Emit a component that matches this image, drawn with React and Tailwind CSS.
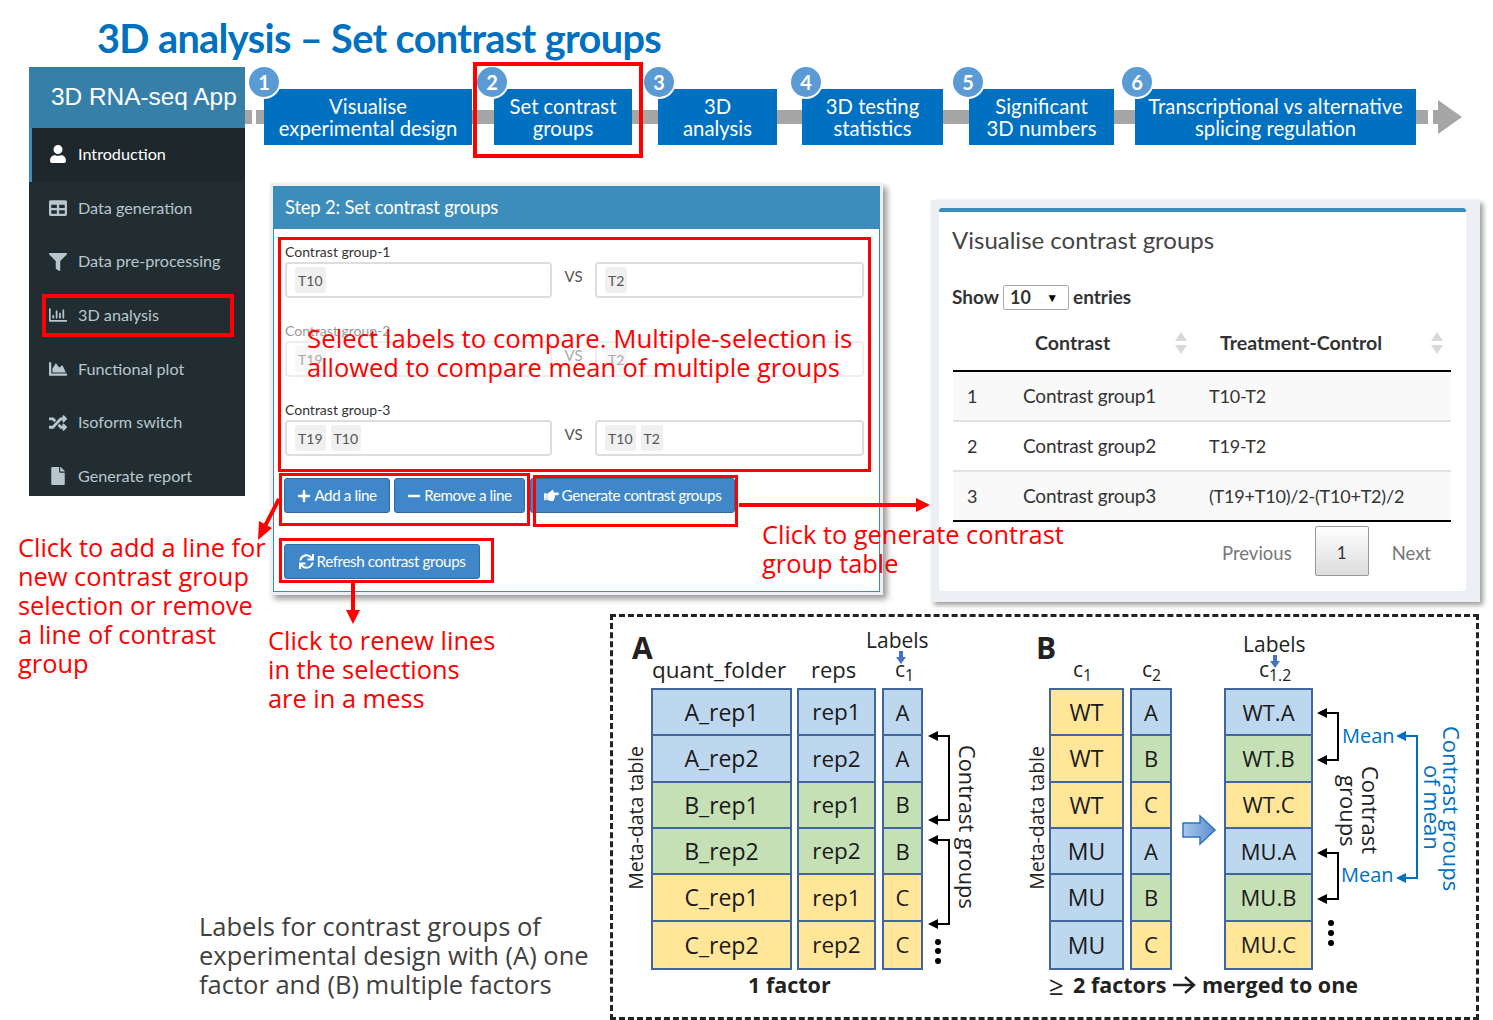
import React from 'react';
import {
  FaUser, FaTable, FaFilter, FaRegChartBar, FaChartArea, FaRandom, FaFile,
  FaPlus, FaMinus, FaHandPointRight, FaSync,
} from 'react-icons/fa';

const menu = [
  { label: 'Introduction', Icon: FaUser, active: true },
  { label: 'Data generation', Icon: FaTable },
  { label: 'Data pre-processing', Icon: FaFilter },
  { label: '3D analysis', Icon: FaRegChartBar },
  { label: 'Functional plot', Icon: FaChartArea },
  { label: 'Isoform switch', Icon: FaRandom },
  { label: 'Generate report', Icon: FaFile },
];

const steps = [
  { n: 1, lines: ['Visualise', 'experimental design'], box: 'w-[208px] mr-[22px]', badge: '-left-[15px]' },
  { n: 2, lines: ['Set contrast', 'groups'], box: 'w-[138px] mr-[26px]', badge: '-left-[17px]' },
  { n: 3, lines: ['3D', 'analysis'], box: 'w-[119px] mr-[25px]', badge: '-left-[14px]' },
  { n: 4, lines: ['3D testing', 'statistics'], box: 'w-[141px] mr-[26px]', badge: '-left-[11px]' },
  { n: 5, lines: ['Significant', '3D numbers'], box: 'w-[145px] mr-[21px]', badge: '-left-[16px]' },
  { n: 6, lines: ['Transcriptional vs alternative', 'splicing regulation'], box: 'w-[281px]', badge: '-left-[13px]' },
];

const groups = [
  { label: 'Contrast group-1', left: ['T10'], right: ['T2'] },
  { label: 'Contrast group-2', left: ['T19'], right: ['T2'], faded: true },
  { label: 'Contrast group-3', left: ['T19', 'T10'], right: ['T10', 'T2'] },
];

const rows = [
  { id: 1, name: 'Contrast group1', value: 'T10-T2', cls: 'bg-[#f9f9f9] border-b-2 border-[#e2e2e2]' },
  { id: 2, name: 'Contrast group2', value: 'T19-T2', cls: 'bg-white border-b-2 border-[#e2e2e2]' },
  { id: 3, name: 'Contrast group3', value: '(T19+T10)/2-(T10+T2)/2', cls: 'bg-[#f9f9f9] border-b-2 border-black' },
];

const tones = { b: 'bg-[#bdd7ee]', g: 'bg-[#c5e0b4]', y: 'bg-[#ffe699]' };

const Tag = ({ children }) => (
  <span className="h-[26px] px-[3px] flex items-center rounded-[3px] bg-[#f0f0f0] text-[14px] text-[#555]">{children}</span>
);

const SelectBox = ({ items }) => (
  <div className="h-[36px] flex items-center gap-[5px] pl-[8px] border-2 border-[#ddd] rounded-[4px]">
    {items.map((t) => <Tag key={t}>{t}</Tag>)}
  </div>
);

const Btn = ({ icon, children, className }) => (
  <div className={`h-[35px] flex items-center justify-center gap-[3px] rounded-[3px] bg-[#3f87c9] border border-[#2e6da4] text-white text-[15.2px] tracking-[-0.4px] ${className}`}>
    {icon}
    {children}
  </div>
);

const SortArrows = () => (
  <svg width="12" height="22" viewBox="0 0 12 22" className="shrink-0">
    <polygon points="6,0 12,9 0,9" fill="#d8d8d8" />
    <polygon points="6,22 12,13 0,13" fill="#d8d8d8" />
  </svg>
);

const Column = ({ cells, className }) => (
  <div className={`h-[282px] grid grid-rows-6 border-2 border-[#41659f] divide-y-2 divide-[#41659f] text-[#1a1a1a] ${className}`}>
    {cells.map(([text, tone], i) => (
      <div key={i} className={`flex items-center justify-center ${tones[tone]}`}>{text}</div>
    ))}
  </div>
);

const diagramText = "absolute font-['Open_Sans',sans-serif] text-[#222] whitespace-nowrap";
const redText = "absolute font-['Open_Sans',sans-serif] text-[#ff0000] leading-[29px] whitespace-nowrap";

export default function App() {
  return (
    <div className="relative w-[1493px] h-[1020px] overflow-hidden bg-white font-['Lato',sans-serif]">
      <h1 className="absolute left-[97px] top-[14px] text-[39.7px] leading-[48px] font-bold tracking-[-0.65px] text-[#0070c0] whitespace-nowrap">
        3D analysis – Set contrast groups
      </h1>

      {/* sidebar */}
      <aside className="absolute left-[29px] top-[67px] w-[216px] h-[429px] overflow-hidden flex flex-col bg-[#222d32]">
        <div className="h-[61px] shrink-0 flex items-center pl-[22px] bg-[#367fa9] text-white text-[24.4px] font-['Liberation_Sans',sans-serif] whitespace-nowrap">
          3D RNA-seq App
        </div>
        {menu.map(({ label, Icon, active }) => (
          <div
            key={label}
            className={active
              ? 'h-[54px] shrink-0 flex items-center pl-[17px] pb-[2px] border-l-[3px] border-[#3c8dbc] bg-[#1e282c] text-white text-[16.2px]'
              : 'h-[53.7px] shrink-0 flex items-center pl-[20px] pb-[2px] text-[#b8c7ce] text-[16.2px]'}
          >
            <span className="w-[29px] shrink-0 flex"><Icon className="w-[18px] h-[18px]" /></span>
            {label}
          </div>
        ))}
      </aside>
      <div className="absolute left-[42px] top-[294px] w-[192px] h-[43px] border-4 border-[#ff0000]" />

      {/* workflow strip */}
      <svg className="absolute left-[245px] top-[98px]" width="1220" height="38">
        <rect x="0" y="12" width="7" height="14" fill="#a6a6a6" />
        <rect x="11" y="12" width="1172" height="14" fill="#a6a6a6" />
        <polygon points="1188,12 1193,12 1193,2 1217,19 1193,36 1193,26 1188,26" fill="#a6a6a6" />
      </svg>
      <div className="absolute left-[264px] top-[89px] flex">
        {steps.map((s) => (
          <div key={s.n} className={`relative h-[56px] flex flex-col items-center justify-center bg-[#0070c0] text-white text-[20.3px] leading-[22.5px] whitespace-nowrap ${s.box}`}>
            <span>{s.lines[0]}</span>
            <span>{s.lines[1]}</span>
            <span className={`absolute -top-[22px] w-[30px] h-[30px] rounded-full flex items-center justify-center bg-[#5b9bd5] ring-2 ring-white font-bold text-[20px] ${s.badge}`}>
              {s.n}
            </span>
          </div>
        ))}
      </div>
      <div className="absolute left-[473px] top-[62px] w-[170px] h-[96px] border-4 border-[#ff0000]" />

      {/* step 2 panel */}
      <section className="absolute left-[270px] top-[183px] w-[613px] h-[412px] p-[3px] bg-[#ecf0f5] shadow-[4px_4px_6px_rgba(0,0,0,0.4)]">
        <div className="h-full bg-white border border-[#3c8dbc]">
          <div className="h-[42px] flex items-center pl-[11px] bg-[#3c8dbc] text-white text-[18.5px] tracking-[-0.2px]">Step 2: Set contrast groups</div>
          <div className="px-[11px] pt-[15px]">
            {groups.map((g) => (
              <div key={g.label} className={g.faded ? 'mb-[25px] opacity-50' : 'mb-[25px]'}>
                <div className="h-[18px] text-[14px] leading-[16px] text-[#333]">{g.label}</div>
                <div className="grid grid-cols-[267px_43px_269px]">
                  <SelectBox items={g.left} />
                  <div className="text-center text-[15px] leading-[28px] text-[#555]">VS</div>
                  <SelectBox items={g.right} />
                </div>
              </div>
            ))}
            <div className="flex -mt-[3px] -ml-[1px]">
              <Btn icon={<FaPlus className="w-[14px] h-[14px]" />} className="w-[106px] mr-[4px]">Add a line</Btn>
              <Btn icon={<FaMinus className="w-[14px] h-[14px]" />} className="w-[131px] mr-[5px]">Remove a line</Btn>
              <Btn icon={<FaHandPointRight className="w-[15px] h-[15px]" />} className="w-[205px]">Generate contrast groups</Btn>
            </div>
            <Btn icon={<FaSync className="w-[15px] h-[15px]" />} className="w-[196px] mt-[31px] -ml-[1px]">Refresh contrast groups</Btn>
          </div>
        </div>
      </section>

      {/* contrast table card */}
      <section className="absolute left-[931px] top-[200px] w-[549px] h-[402px] pl-[8px] pt-[8px] bg-[#ecf0f5] shadow-[3px_3px_5px_rgba(0,0,0,0.4)]">
        <div className="w-[527px] h-[383px] pl-[14px] pr-[15px] pt-[15px] bg-white border-t-[4px] border-[#3c8dbc] rounded-[3px]">
          <h2 className="-ml-[1px] text-[24px] leading-[26px] text-[#444]">Visualise contrast groups</h2>
          <div className="-ml-[1px] mt-[32px] h-[25px] flex items-center text-[19px] font-bold text-[#333]">
            Show
            <div className="ml-[4px] mr-[4px] w-[66px] h-[25px] flex items-center justify-between pl-[6px] pr-[10px] border border-[#aaa] rounded-[2px] text-[18px]">
              10<span className="text-[12px] text-black">▼</span>
            </div>
            entries
          </div>
          <div className="mt-[18px] h-[44px] pb-[19px] grid grid-cols-[82px_185px_1fr] items-center border-b-2 border-black text-[19.6px] font-bold text-[#333]">
            <span />
            <div className="flex items-center justify-between pr-[33px]">Contrast<SortArrows /></div>
            <div className="flex items-center justify-between pr-[8px]">Treatment-Control<SortArrows /></div>
          </div>
          {rows.map((r) => (
            <div key={r.id} className={`h-[50px] grid grid-cols-[70px_186px_1fr] items-center text-[18px] text-[#333] tracking-[-0.2px] ${r.cls}`}>
              <span className="pl-[14px]">{r.id}</span>
              <span className="text-[19px]">{r.name}</span>
              <span>{r.value}</span>
            </div>
          ))}
          <div className="mt-[4px] flex items-center justify-end pr-[20px] text-[18.5px] text-[#777]">
            <span className="pt-[5px]">Previous</span>
            <div className="mx-[23px] w-[54px] h-[50px] pt-[4px] flex items-center justify-center border border-[#979797] rounded-[2px] bg-gradient-to-b from-white to-[#dcdcdc] text-[#333] text-[17px]">1</div>
            <span className="pt-[5px]">Next</span>
          </div>
        </div>
      </section>

      {/* red callouts */}
      <p className={`${redText} text-[25.8px] left-[307px] top-[324px]`}>Select labels to compare. Multiple-selection is<br /><span className="text-[25.45px]">allowed to compare mean of multiple groups</span></p>
      <p className={`${redText} text-[25.4px] left-[18px] top-[533px]`}>Click to add a line for<br />new contrast group<br />selection or remove<br />a line of contrast<br />group</p>
      <p className={`${redText} text-[25.4px] left-[268px] top-[626px]`}>Click to renew lines<br />in the selections<br />are in a mess</p>
      <p className={`${redText} text-[25.4px] left-[762px] top-[520px]`}>Click to generate contrast<br />group table</p>
      <p className="absolute left-[199px] top-[912px] font-['Open_Sans',sans-serif] text-[25.5px] leading-[29px] text-[#404040] whitespace-nowrap">
        Labels for contrast groups of<br />experimental design with (A) one<br />factor and (B) multiple factors
      </p>
      <div className="absolute left-[278px] top-[237px] w-[593px] h-[235px] border-[3px] border-[#ff0000]" />
      <div className="absolute left-[279px] top-[473px] w-[251px] h-[53px] border-[3px] border-[#ff0000]" />
      <div className="absolute left-[533px] top-[475px] w-[205px] h-[52px] border-[3px] border-[#ff0000]" />
      <div className="absolute left-[279px] top-[538px] w-[215px] h-[45px] border-[3px] border-[#ff0000]" />

      {/* diagram box */}
      <div className="absolute left-[610px] top-[614px] w-[869px] h-[406px] border-[3px] border-dashed border-[#222]" />

      {/* panel A */}
      <span className="absolute left-[632px] top-[628px] text-[30px] leading-[40px] font-bold text-[#222] font-['Open_Sans',sans-serif]">A</span>
      <span className={`${diagramText} left-[866px] top-[624px] text-[21px] leading-[32px]`}>Labels</span>
      <div className="absolute left-[651px] top-[655px] w-[272px] flex flex-col font-['Open_Sans',sans-serif] text-[#222]">
        <div className="h-[33px] pb-[4px] grid grid-cols-[146px_85px_41px] items-center leading-[29px] whitespace-nowrap">
          <span className="pl-[1px] text-[22.5px]">quant_folder</span>
          <span className="pl-[14px] text-[22px]">reps</span>
          <span className="pl-[13px] text-[21px]">c<sub>1</sub></span>
        </div>
        <div className="flex">
          <Column className="w-[141px] mr-[5px] text-[23px]" cells={[['A_rep1', 'b'], ['A_rep2', 'b'], ['B_rep1', 'g'], ['B_rep2', 'g'], ['C_rep1', 'y'], ['C_rep2', 'y']]} />
          <Column className="w-[79px] mr-[6px] text-[22.5px]" cells={[['rep1', 'b'], ['rep2', 'b'], ['rep1', 'g'], ['rep2', 'g'], ['rep1', 'y'], ['rep2', 'y']]} />
          <Column className="w-[41px] text-[22px]" cells={[['A', 'b'], ['A', 'b'], ['B', 'g'], ['B', 'g'], ['C', 'y'], ['C', 'y']]} />
        </div>
        <div className="-mt-[1px] pl-[97px] text-[21.5px] leading-[32px] font-bold">1 factor</div>
      </div>
      <span className={`${diagramText} left-[622px] top-[746px] text-[19.5px] leading-[28px] [writing-mode:vertical-rl] rotate-180`}>Meta-data table</span>
      <span className={`${diagramText} left-[953px] top-[745px] text-[21.8px] leading-[28px] [writing-mode:vertical-rl]`}>Contrast groups</span>

      {/* panel B */}
      <span className="absolute left-[1036px] top-[628px] text-[30px] leading-[40px] font-bold text-[#222] font-['Open_Sans',sans-serif]">B</span>
      <span className={`${diagramText} left-[1243px] top-[628px] text-[21px] leading-[32px]`}>Labels</span>
      <div className="absolute left-[1049px] top-[655px] w-[320px] flex flex-col font-['Open_Sans',sans-serif] text-[#222]">
        <div className="w-[264px] h-[33px] pb-[4px] grid grid-cols-[81px_94px_89px] items-center text-[21px] leading-[29px] whitespace-nowrap">
          <span className="pl-[24px]">c<sub>1</sub></span>
          <span className="pl-[12px]">c<sub>2</sub></span>
          <span className="pl-[35px]">c<sub>1.2</sub></span>
        </div>
        <div className="flex">
          <Column className="w-[75px] mr-[6px] text-[23px]" cells={[['WT', 'y'], ['WT', 'y'], ['WT', 'y'], ['MU', 'b'], ['MU', 'b'], ['MU', 'b']]} />
          <Column className="w-[42px] mr-[52px] text-[22px]" cells={[['A', 'b'], ['B', 'g'], ['C', 'y'], ['A', 'b'], ['B', 'g'], ['C', 'y']]} />
          <Column className="w-[89px] text-[22px]" cells={[['WT.A', 'b'], ['WT.B', 'g'], ['WT.C', 'y'], ['MU.A', 'b'], ['MU.B', 'g'], ['MU.C', 'y']]} />
        </div>
        <div className="-mt-[1px] flex items-center text-[21.5px] leading-[32px] font-bold whitespace-nowrap">
          <span className="w-[24px] shrink-0 text-[26px] font-normal">≥</span>
          <span className="w-[93px] shrink-0">2 factors</span>
          <svg width="24" height="20" viewBox="0 0 24 20" className="shrink-0 ml-[6px] mr-[6px]">
            <path d="M1 10H21M13 2L22 10L13 18" stroke="#222" strokeWidth="2.4" fill="none" />
          </svg>
          <span>merged to one</span>
        </div>
      </div>
      <span className={`${diagramText} left-[1023px] top-[746px] text-[19.5px] leading-[28px] [writing-mode:vertical-rl] rotate-180`}>Meta-data table</span>
      <span className={`${diagramText} left-[1357px] top-[766px] text-[22px] leading-[28px] [writing-mode:vertical-rl]`}>Contrast</span>
      <span className={`${diagramText} left-[1335px] top-[775px] text-[22px] leading-[28px] [writing-mode:vertical-rl]`}>groups</span>
      <span className={`${diagramText} left-[1342px] top-[721px] text-[20px] leading-[30px] !text-[#0070c0]`}>Mean</span>
      <span className={`${diagramText} left-[1341px] top-[860px] text-[20px] leading-[30px] !text-[#0070c0]`}>Mean</span>
      <span className={`${diagramText} left-[1438px] top-[726px] text-[22px] leading-[28px] !text-[#0070c0] [writing-mode:vertical-rl]`}>Contrast groups</span>
      <span className={`${diagramText} left-[1419px] top-[765px] text-[22px] leading-[28px] !text-[#0070c0] [writing-mode:vertical-rl]`}>of mean</span>

      {/* arrows */}
      <svg className="absolute left-0 top-0 pointer-events-none" width="1493" height="1020">
        <g stroke="#ff0000" strokeWidth="4" fill="none">
          <path d="M279 499L265 526" />
          <path d="M739 505H916" />
          <path d="M353 583V611" />
        </g>
        <g fill="#ff0000">
          <polygon points="258,540 259,521 272,528" />
          <polygon points="930,505 916,498 916,512" />
          <polygon points="353,624 346,610 360,610" />
        </g>
        <g stroke="#000" strokeWidth="2" fill="none">
          <path d="M936 736H949V820H936" />
          <path d="M936 840H949V924H936" />
          <path d="M1325 713H1338V760H1325" />
          <path d="M1325 853H1338V899H1325" />
        </g>
        <g fill="#000">
          <polygon points="928,736 938,731 938,741" />
          <polygon points="928,820 938,815 938,825" />
          <polygon points="928,840 938,835 938,845" />
          <polygon points="928,924 938,919 938,929" />
          <polygon points="1317,713 1327,708 1327,718" />
          <polygon points="1317,760 1327,755 1327,765" />
          <polygon points="1317,853 1327,848 1327,858" />
          <polygon points="1317,899 1327,894 1327,904" />
          <circle cx="938" cy="942" r="3" />
          <circle cx="938" cy="951" r="3" />
          <circle cx="938" cy="961" r="3" />
          <circle cx="1331" cy="923" r="3" />
          <circle cx="1331" cy="933" r="3" />
          <circle cx="1331" cy="943" r="3" />
        </g>
        <path d="M1404 736H1417V878H1404" stroke="#0070c0" strokeWidth="2" fill="none" />
        <polygon points="1396,736 1406,731 1406,741" fill="#0070c0" />
        <polygon points="1396,878 1406,873 1406,883" fill="#0070c0" />
        <path d="M901 651V658" stroke="#4472c4" strokeWidth="4" />
        <polygon points="896,657 906,657 901,664" fill="#4472c4" />
        <path d="M1275 655V662" stroke="#4472c4" strokeWidth="4" />
        <polygon points="1270,661 1280,661 1275,668" fill="#4472c4" />
        <defs>
          <linearGradient id="blockArrow" x1="0" y1="0" x2="1" y2="0">
            <stop offset="0" stopColor="#a9c8ec" />
            <stop offset="1" stopColor="#5b8fd0" />
          </linearGradient>
        </defs>
        <polygon points="1183,823 1200,823 1200,816 1215,830 1200,844 1200,837 1183,837" fill="url(#blockArrow)" stroke="#2e75b6" strokeWidth="1.5" />
      </svg>
    </div>
  );
}
